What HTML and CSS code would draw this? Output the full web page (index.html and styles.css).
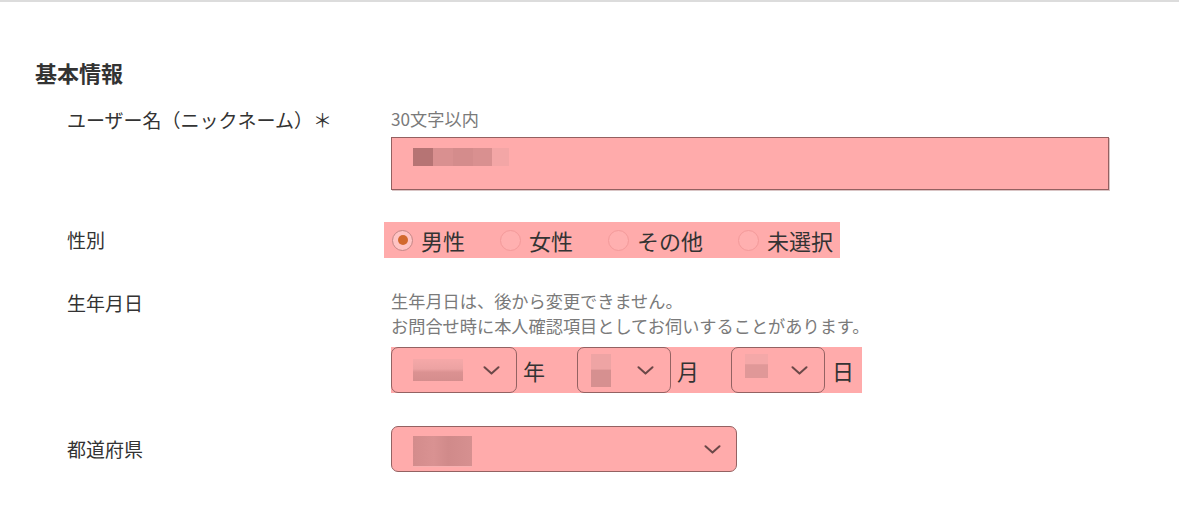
FILE: index.html
```html
<!DOCTYPE html>
<html lang="ja">
<head>
<meta charset="utf-8">
<title>基本情報</title>
<link rel="stylesheet" href="styles.css">
</head>
<body>
<div class="page">
  <h2 class="heading">基本情報</h2>

  <div class="row row-name">
    <div class="label">ユーザー名（ニックネーム）＊</div>
    <div class="field">
      <div class="note">30文字以内</div>
      <div class="textbox">
        <span class="blur b-dark" style="width:20px"></span>
        <span class="blur b-mid" style="width:20px"></span>
        <span class="blur b-mid2" style="width:20px"></span>
        <span class="blur b-mid" style="width:19px"></span>
        <span class="blur b-light" style="width:17px"></span>
      </div>
    </div>
  </div>

  <div class="row row-gender">
    <div class="label">性別</div>
    <div class="field">
      <div class="radios">
        <div class="radio-item"><span class="radio checked"><span class="dot"></span></span><span class="radio-text">男性</span></div>
        <div class="radio-item"><span class="radio"></span><span class="radio-text">女性</span></div>
        <div class="radio-item"><span class="radio"></span><span class="radio-text">その他</span></div>
        <div class="radio-item"><span class="radio"></span><span class="radio-text">未選択</span></div>
      </div>
    </div>
  </div>

  <div class="row row-birth">
    <div class="label">生年月日</div>
    <div class="field">
      <div class="note">生年月日は、後から変更できません。<br>お問合せ時に本人確認項目としてお伺いすることがあります。</div>
      <div class="dates">
        <div class="select sel-year">
          <span class="val val-year"></span>
          <svg class="chev" width="17" height="9" viewBox="0 0 17 9"><path d="M1.5 1.2 L8.5 7.6 L15.5 1.2" fill="none" stroke="#6b4848" stroke-width="2" stroke-linecap="round" stroke-linejoin="round"/></svg>
        </div>
        <span class="unit">年</span>
        <div class="select sel-small">
          <span class="val val-month"></span>
          <svg class="chev" width="17" height="9" viewBox="0 0 17 9"><path d="M1.5 1.2 L8.5 7.6 L15.5 1.2" fill="none" stroke="#6b4848" stroke-width="2" stroke-linecap="round" stroke-linejoin="round"/></svg>
        </div>
        <span class="unit">月</span>
        <div class="select sel-small">
          <span class="val val-day"></span>
          <svg class="chev" width="17" height="9" viewBox="0 0 17 9"><path d="M1.5 1.2 L8.5 7.6 L15.5 1.2" fill="none" stroke="#6b4848" stroke-width="2" stroke-linecap="round" stroke-linejoin="round"/></svg>
        </div>
        <span class="unit unit-last">日</span>
      </div>
    </div>
  </div>

  <div class="row row-pref">
    <div class="label">都道府県</div>
    <div class="field">
      <div class="select sel-pref">
        <span class="val val-pref"></span>
        <svg class="chev" width="17" height="9" viewBox="0 0 17 9"><path d="M1.5 1.2 L8.5 7.6 L15.5 1.2" fill="none" stroke="#6b4848" stroke-width="2" stroke-linecap="round" stroke-linejoin="round"/></svg>
      </div>
    </div>
  </div>
</div>
</body>
</html>
```

FILE: styles.css
```css
* { box-sizing: border-box; }

html, body {
  margin: 0;
  padding: 0;
  background: #ffffff;
}

body {
  font-family: "Noto Sans CJK JP", "Noto Sans", sans-serif;
  color: #333333;
  border-top: 2px solid #dcdcdc;
}

.page {
  padding: 55px 0 0 35px;
}

.heading {
  margin: 0;
  font-size: 22px;
  line-height: 30px;
  font-weight: bold;
  color: #333333;
}

.row {
  display: flex;
  padding-left: 32px;
}

.label {
  width: 324px;
  flex: none;
  font-size: 19px;
  line-height: 30px;
  color: #333333;
}

.field {
  flex: none;
}

.note {
  font-size: 17.2px;
  line-height: 25px;
  color: #7a7a7a;
}

/* name */
.row-name {
  margin-top: 18px;
  align-items: flex-start;
}
.row-name .field { padding-top: 1px; }

.textbox {
  margin-top: 6px;
  width: 718px;
  height: 53px;
  background: #ffabab;
  border: 1px solid #946060;
  box-shadow: 1px 1px 0 rgba(150, 90, 90, 0.35);
  display: flex;
  align-items: flex-start;
  padding: 10px 0 0 21px;
}

.blur {
  display: block;
  height: 18px;
}
.b-dark { background: #b67474; }
.b-mid { background: #d99090; }
.b-mid2 { background: #d48c8c; }
.b-light { background: #f3a6a6; }

/* gender */
.row-gender {
  margin-top: 32px;
  align-items: center;
}

.radios {
  margin-left: -7px;
  height: 36px;
  background: #ffabab;
  display: flex;
  align-items: center;
  padding: 0 7px 0 8px;
  gap: 35px;
}

.radio-item {
  display: flex;
  align-items: center;
  gap: 8px;
}

.radio {
  width: 21px;
  height: 21px;
  border-radius: 50%;
  border: 1px solid #f39a9a;
  background: #ffb0b0;
  display: flex;
  align-items: center;
  justify-content: center;
}

.radio.checked {
  border-color: #c48686;
  background: #ffc4c4;
}

.dot {
  width: 10px;
  height: 10px;
  border-radius: 50%;
  background: #d2692e;
}

.radio-text {
  font-size: 22px;
  line-height: 30px;
  color: #333333;
}

/* birth */
.row-birth {
  margin-top: 30px;
  align-items: flex-start;
}

.dates {
  margin-top: 9px;
  height: 46px;
  background: #ffabab;
  display: flex;
  align-items: center;
  padding-right: 8px;
  width: max-content;
}

.select {
  height: 46px;
  border: 1px solid #946262;
  border-radius: 7px;
  background: #ffabab;
  display: flex;
  align-items: center;
  justify-content: space-between;
  padding: 0 16px 0 21px;
}

.sel-year { width: 126px; }
.sel-small { width: 94px; padding-left: 13px; }

.unit {
  font-size: 22px;
  line-height: 30px;
  margin: 0 32px 0 6px;
  color: #333333;
}
.unit-last { margin-right: 0; margin-left: 7px; }

.chev { display: block; }

.val { display: block; }
.val-year {
  width: 50px;
  height: 22px;
  background: linear-gradient(to bottom, #f5a8a8 0%, #eba2a2 45%, #d99090 60%, #d38c8c 100%);
  opacity: 0.95;
}
.val-month {
  width: 20px;
  height: 33px;
  background: linear-gradient(to bottom, #eea4a4 0%, #eea4a4 45%, #d69090 50%, #d69090 100%);
}
.val-day {
  width: 23px;
  height: 24px;
  margin-bottom: 8px;
  background: linear-gradient(to bottom, #f4a8a8 0%, #f4a8a8 40%, #e09898 45%, #e09898 100%);
}

/* prefecture */
.row-pref {
  margin-top: 33px;
  align-items: center;
}

.sel-pref {
  width: 346px;
  padding-right: 15px;
}

.val-pref {
  width: 59px;
  height: 30px;
  margin-top: 4px;
  background: linear-gradient(to right, #d38c8c 0%, #d99292 35%, #d08a8a 60%, #d69090 100%);
  box-shadow: 0 1px 0 #f6b0b0;
}
```
